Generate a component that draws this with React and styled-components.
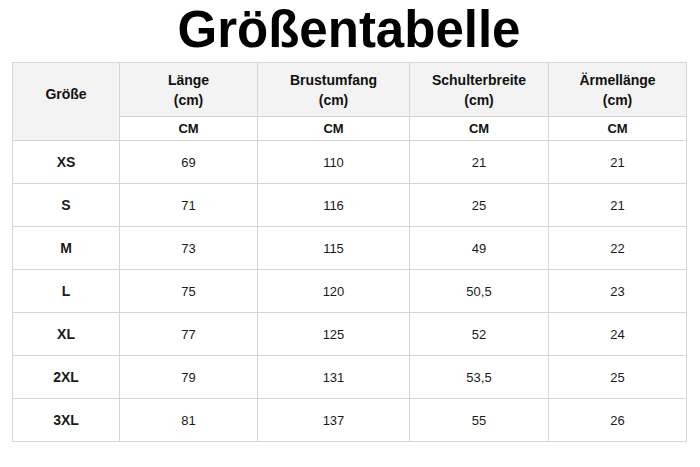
import React from "react";
import styled, { createGlobalStyle } from "styled-components";

const GlobalStyle = createGlobalStyle`
  html, body {
    margin: 0;
    padding: 0;
    background: #fff;
    font-family: "Liberation Sans", Arial, sans-serif;
    color: #111;
  }
`;

const Page = styled.div`
  width: 700px;
  height: 467px;
  box-sizing: border-box;
  padding: 0 14px 0 12px;
`;

const Title = styled.h1`
  margin: 0;
  height: 62px;
  line-height: 60px;
  text-align: center;
  font-size: 51px;
  font-weight: 700;
  color: #000;
`;

const Table = styled.table`
  width: 674px;
  border-collapse: collapse;
  table-layout: fixed;
  border: 1px solid #d6d6d6;
`;

const HeadCell = styled.th`
  background: ${(p) => (p.$white ? "#fff" : "#f3f3f3")};
  border: 1px solid #d6d6d6;
  font-size: ${(p) => (p.$white ? "13px" : "14px")};
  font-weight: 700;
  line-height: 20px;
  text-align: center;
  vertical-align: middle;
  padding: 0;
  height: ${(p) => p.$h}px;
`;

const CornerCell = styled(HeadCell)`
  vertical-align: top;
  padding-top: 21px;
`;

const Cell = styled.td`
  border: 1px solid #d6d6d6;
  text-align: center;
  vertical-align: middle;
  padding: 0;
  height: 42px;
  font-size: ${(p) => (p.$bold ? "14px" : "13px")};
  font-weight: ${(p) => (p.$bold ? 700 : 400)};
  color: #1a1a1a;
`;

const columns = ["Länge", "Brustumfang", "Schulterbreite", "Ärmellänge"];
const widths = [107, 138, 152, 139, 138];

const rows = [
  ["XS", "69", "110", "21", "21"],
  ["S", "71", "116", "25", "21"],
  ["M", "73", "115", "49", "22"],
  ["L", "75", "120", "50,5", "23"],
  ["XL", "77", "125", "52", "24"],
  ["2XL", "79", "131", "53,5", "25"],
  ["3XL", "81", "137", "55", "26"],
];

export default function App() {
  return (
    <Page>
      <GlobalStyle />
      <Title>Größentabelle</Title>
      <Table>
        <colgroup>
          {widths.map((w, i) => (
            <col key={i} style={{ width: w }} />
          ))}
        </colgroup>
        <thead>
          <tr>
            <CornerCell rowSpan={2} $h={53}>
              Größe
            </CornerCell>
            {columns.map((c) => (
              <HeadCell key={c} $h={53}>
                {c}
                <br />
                (cm)
              </HeadCell>
            ))}
          </tr>
          <tr>
            {columns.map((c) => (
              <HeadCell key={c} $white $h={23}>
                CM
              </HeadCell>
            ))}
          </tr>
        </thead>
        <tbody>
          {rows.map((r) => (
            <tr key={r[0]}>
              {r.map((v, i) => (
                <Cell key={i} $bold={i === 0}>
                  {v}
                </Cell>
              ))}
            </tr>
          ))}
        </tbody>
      </Table>
    </Page>
  );
}
